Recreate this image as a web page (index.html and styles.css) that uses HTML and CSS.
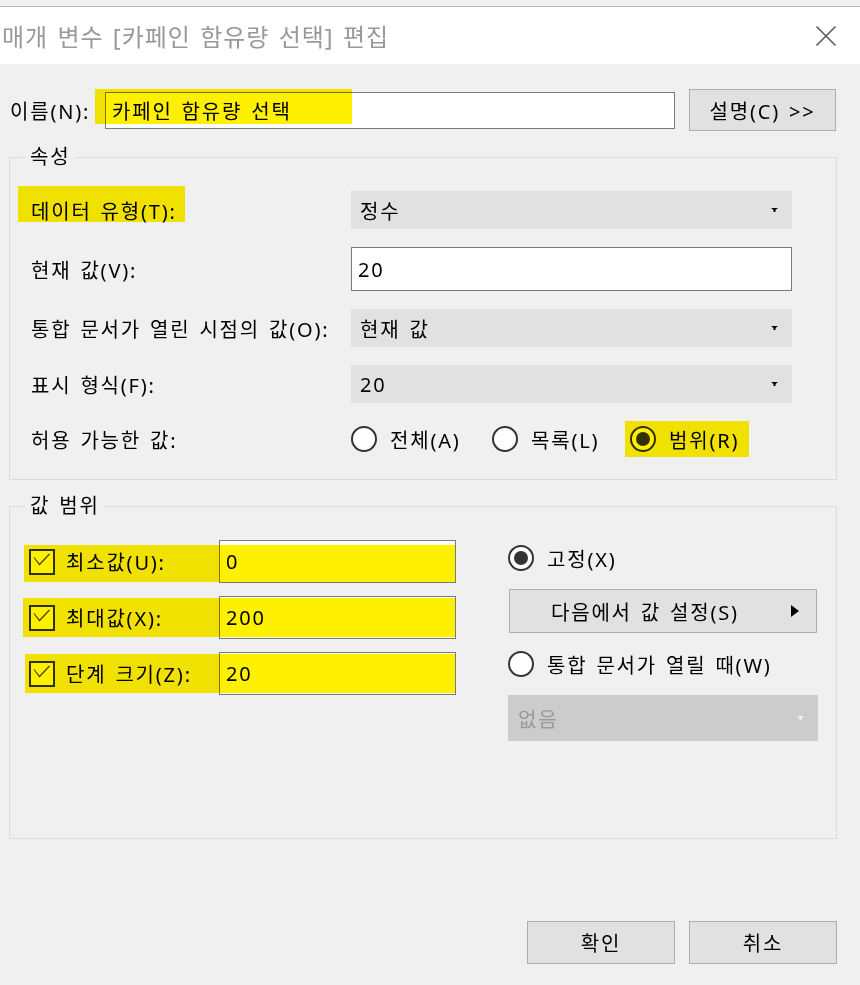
FILE: index.html
```html
<!DOCTYPE html>
<html lang="ko">
<head>
  <meta charset="UTF-8">
  <meta name="viewport" content="width=device-width, initial-scale=1.0">
  <title>매개 변수 편집</title>
  <link rel="stylesheet" href="styles.css">
</head>
<body>
  <div class="window-top"></div>
  <div class="titlebar">
    <span class="title">매개 변수 [카페인 함유량 선택] 편집</span>
    <svg class="close" width="22" height="22" viewBox="0 0 22 22">
      <path d="M1.5 1.5 L20.5 20.5 M20.5 1.5 L1.5 20.5" stroke="#5a5a5a" stroke-width="1.6" fill="none"/>
    </svg>
  </div>

  <div class="name-row">
    <span class="name-label">이름(N):</span>
    <div class="textbox name-box">카페인 함유량 선택</div>
    <button class="btn btn-desc">설명(C) &gt;&gt;</button>
    <span class="hl hl-name"></span>
  </div>

  <div class="group group-props">
    <div class="group-title">속성</div>
    <div class="props-grid">
      <div class="field-label">데이터 유형(T):<span class="hl hl-type"></span></div>
      <div class="combo"><span>정수</span><svg class="arrow" width="7" height="4" viewBox="0 0 7 4"><path d="M0 0 H7 L4.5 2 V4 H2.5 V2 Z" fill="#000"/></svg></div>

      <div class="field-label">현재 값(V):</div>
      <div class="textbox">20</div>

      <div class="field-label">통합 문서가 열린 시점의 값(O):</div>
      <div class="combo"><span>현재 값</span><svg class="arrow" width="7" height="4" viewBox="0 0 7 4"><path d="M0 0 H7 L4.5 2 V4 H2.5 V2 Z" fill="#000"/></svg></div>

      <div class="field-label">표시 형식(F):</div>
      <div class="combo"><span>20</span><svg class="arrow" width="7" height="4" viewBox="0 0 7 4"><path d="M0 0 H7 L4.5 2 V4 H2.5 V2 Z" fill="#000"/></svg></div>

      <div class="field-label">허용 가능한 값:</div>
      <div class="radios">
        <div class="radio-opt opt-all"><span class="radio"></span>전체(A)</div>
        <div class="radio-opt opt-list"><span class="radio"></span>목록(L)</div>
        <div class="radio-opt"><span class="radio on"></span>범위(R)<span class="hl hl-range"></span></div>
      </div>
    </div>
  </div>

  <div class="group group-range">
    <div class="group-title">값 범위</div>
    <div class="range-body">
      <div class="left-col">
        <div class="check-row">
          <span class="checkbox"><svg width="22" height="22" viewBox="0 0 22 22"><path d="M3 6.5 L8.5 13.5 L18.5 3" stroke="#444" stroke-width="1.2" fill="none"/></svg></span>
          <span class="check-label">최소값(U):</span>
          <div class="textbox range-input">0</div>
          <span class="hl hl-min"></span>
        </div>
        <div class="check-row">
          <span class="checkbox"><svg width="22" height="22" viewBox="0 0 22 22"><path d="M3 6.5 L8.5 13.5 L18.5 3" stroke="#444" stroke-width="1.2" fill="none"/></svg></span>
          <span class="check-label">최대값(X):</span>
          <div class="textbox range-input">200</div>
          <span class="hl hl-max"></span>
        </div>
        <div class="check-row">
          <span class="checkbox"><svg width="22" height="22" viewBox="0 0 22 22"><path d="M3 6.5 L8.5 13.5 L18.5 3" stroke="#444" stroke-width="1.2" fill="none"/></svg></span>
          <span class="check-label">단계 크기(Z):</span>
          <div class="textbox range-input">20</div>
          <span class="hl hl-step"></span>
        </div>
      </div>

      <div class="right-col">
        <div class="radio-opt"><span class="radio on"></span>고정(X)</div>
        <button class="btn btn-source"><span>다음에서 값 설정(S)</span><svg width="8" height="12" viewBox="0 0 8 12"><path d="M0 0 L8 6 L0 12 Z" fill="#000"/></svg></button>
        <div class="radio-opt"><span class="radio"></span>통합 문서가 열릴 때(W)</div>
        <div class="combo combo-disabled"><span>없음</span><svg class="arrow" width="7" height="4" viewBox="0 0 7 4"><path d="M0 0 H7 L4.5 2 V4 H2.5 V2 Z" fill="#f4f4f4"/></svg></div>
      </div>
    </div>
  </div>

  <div class="footer">
    <button class="btn btn-footer">확인</button>
    <button class="btn btn-footer">취소</button>
  </div>
</body>
</html>
```

FILE: styles.css
```css
body {
  margin: 0;
  width: 860px;
  height: 985px;
  overflow: hidden;
  background: #f0f0f0;
  color: #000;
  font-family: "Noto Sans", "Noto Sans CJK KR", sans-serif;
  font-size: 20px;
  letter-spacing: 1.8px;
  word-spacing: 2px;
}

.window-top {
  height: 6px;
  border-bottom: 1px solid #b9b9b9;
}

.titlebar {
  height: 57px;
  background: #fff;
  display: flex;
  align-items: center;
  justify-content: space-between;
  padding: 0 23px 0 2px;
}

.title {
  font-size: 24px;
  letter-spacing: 1px;
  color: #999;
}

/* yellow marker highlights drawn over the controls */
.hl {
  position: absolute;
  background: #fff000;
  mix-blend-mode: multiply;
  pointer-events: none;
}

.name-row {
  position: relative;
  display: flex;
  align-items: center;
  height: 42px;
  margin-top: 25px;
}

.name-label {
  width: 95px;
  margin-left: 10px;
}

.textbox {
  box-sizing: border-box;
  display: flex;
  align-items: center;
  padding-left: 6px;
  background: #fff;
  border: 1px solid #7a7a7a;
}

.name-box {
  width: 570px;
  height: 37px;
}

.btn {
  box-sizing: border-box;
  padding: 0;
  font: inherit;
  letter-spacing: inherit;
  word-spacing: inherit;
  color: #000;
  background: #e1e1e1;
  border: 1px solid #adadad;
}

.btn-desc {
  width: 147px;
  height: 42px;
  margin-left: 14px;
}

.hl-name {
  left: 95px;
  top: 0;
  width: 257px;
  height: 35px;
}

.group {
  box-sizing: border-box;
  width: 828px;
  margin-left: 9px;
  border: 1px solid #dcdcdc;
}

.group-title {
  width: fit-content;
  height: 24px;
  line-height: 24px;
  margin: -13px 0 0 15px;
  padding: 0 5px;
  background: #f0f0f0;
}

.group-props {
  height: 323px;
  margin-top: 26px;
}

.props-grid {
  display: grid;
  grid-template-columns: 320px 441px;
  grid-template-rows: 38px 44px 38px 38px 36px;
  row-gap: 18px;
  margin: 22px 0 0 21px;
}

.field-label {
  position: relative;
  display: flex;
  align-items: center;
}

.hl-type {
  left: -13px;
  top: -5px;
  width: 167px;
  height: 36px;
}

.combo {
  display: flex;
  align-items: center;
  justify-content: space-between;
  padding: 0 14px 0 9px;
  background: #e1e1e1;
}

.combo-disabled {
  height: 46px;
  background: #ccc;
  color: #999;
  padding-left: 10px;
}

.radios {
  display: flex;
  align-items: center;
}

.radio-opt {
  position: relative;
  display: flex;
  align-items: center;
  gap: 13px;
  height: 36px;
}

.opt-all {
  width: 141px;
}

.opt-list {
  width: 138px;
}

.radio {
  box-sizing: border-box;
  display: flex;
  align-items: center;
  justify-content: center;
  width: 26px;
  height: 26px;
  border: 2px solid #333;
  border-radius: 50%;
  background: #fff;
}

.radio.on::after {
  content: "";
  width: 14px;
  height: 14px;
  border-radius: 50%;
  background: #333;
}

.hl-range {
  left: -5px;
  top: 0;
  width: 124px;
  height: 36px;
}

.group-range {
  height: 333px;
  margin-top: 26px;
}

.range-body {
  display: grid;
  grid-template-columns: 479px 310px;
  margin: 22px 0 0 19px;
}

.left-col {
  display: flex;
  flex-direction: column;
  gap: 13px;
}

.check-row {
  position: relative;
  display: flex;
  align-items: center;
  height: 43px;
}

.checkbox {
  box-sizing: border-box;
  display: flex;
  align-items: center;
  justify-content: center;
  width: 26px;
  height: 26px;
  border: 2px solid #333;
  background: #fff;
}

.check-label {
  width: 153px;
  margin-left: 11px;
}

.range-input {
  width: 237px;
  height: 43px;
}

.hl-min {
  left: -5px;
  top: 5px;
  width: 431px;
  height: 37px;
}

.hl-max {
  left: -6px;
  top: 2px;
  width: 432px;
  height: 39px;
}

.hl-step {
  left: -4px;
  top: 2px;
  width: 430px;
  height: 39px;
}

.right-col {
  display: flex;
  flex-direction: column;
  gap: 13px;
}

.btn-source {
  display: flex;
  align-items: center;
  justify-content: space-between;
  width: 308px;
  height: 44px;
  margin-left: 1px;
  padding: 0 17px 0 41px;
}

.footer {
  display: flex;
  justify-content: flex-end;
  gap: 14px;
  margin-top: 82px;
  padding-right: 23px;
}

.btn-footer {
  width: 148px;
  height: 43px;
}
```
